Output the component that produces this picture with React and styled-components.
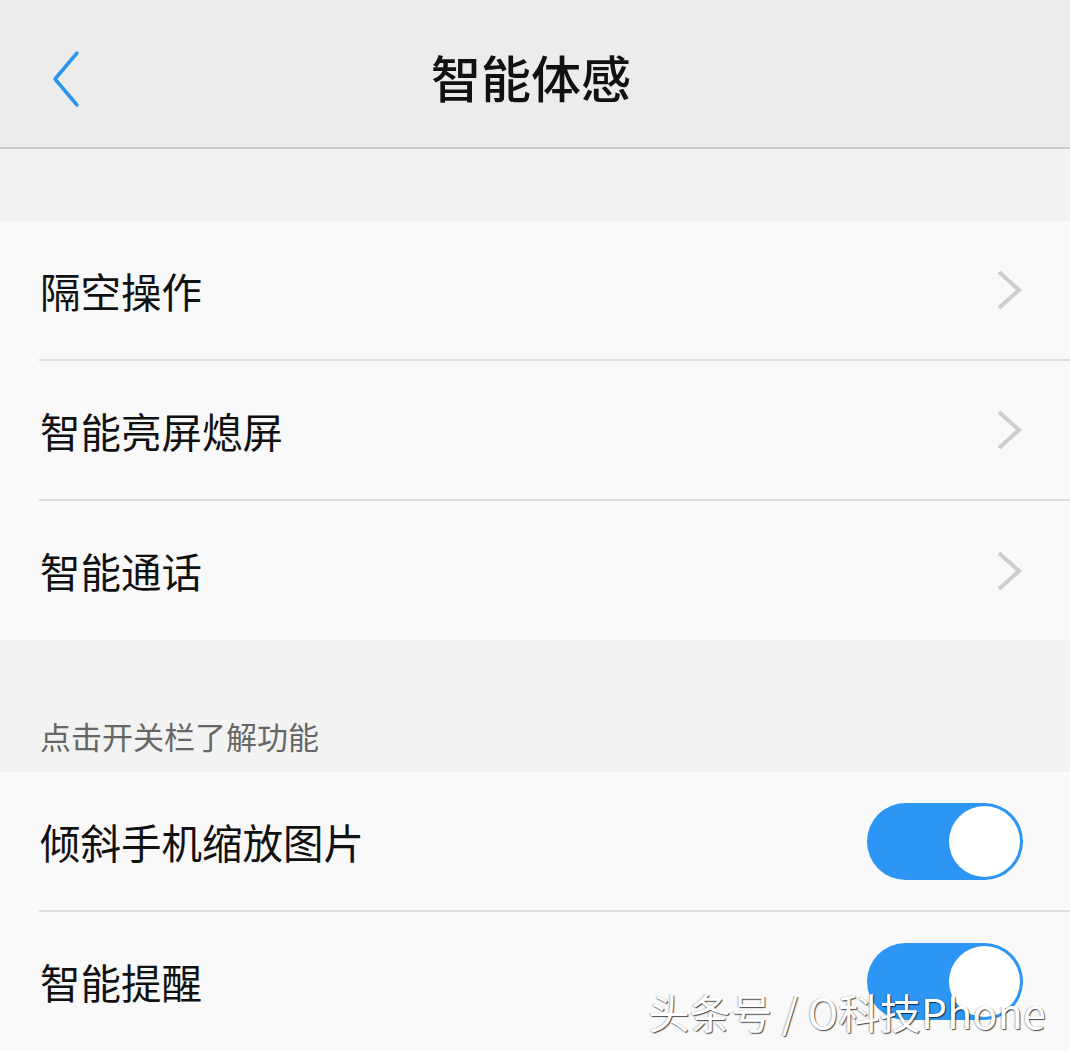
import React, { useState } from "react";
import styled, { createGlobalStyle } from "styled-components";

const GlobalStyle = createGlobalStyle`
  html, body {
    margin: 0;
    padding: 0;
    background: #f3f3f3;
  }
  body {
    font-family: "Noto Sans CJK SC", "Noto Sans", sans-serif;
    color: #111;
  }
`;

const Screen = styled.div`
  position: relative;
  width: 1070px;
  height: 1051px;
  overflow: hidden;
  background: #f3f3f3;
`;

const Header = styled.header`
  height: 147px;
  background: #ececec;
  border-bottom: 2px solid #cbcbcb;
  display: grid;
  grid-template-columns: 120px 1fr 120px;
  align-items: center;
`;

const BackButton = styled.button`
  background: none;
  border: none;
  padding: 10px 0 0 49px;
  height: 100%;
  display: flex;
  align-items: center;
  cursor: pointer;
`;

const Title = styled.h1`
  margin: 0;
  text-align: center;
  font-size: 50px;
  font-weight: 500;
  color: #111;
  padding-top: 4px;
  transform: translateX(-4px);
`;

const Spacer = styled.div`
  height: ${(p) => p.$h}px;
`;

const Card = styled.section`
  background: #f9f9f9;
`;

const Row = styled.div`
  height: ${(p) => (p.$last ? 139 : 138)}px;
  display: flex;
  align-items: center;
  justify-content: space-between;
  padding: 0 46px 0 40px;
  border-bottom: ${(p) => (p.$last ? "none" : "2px solid transparent")};
  position: relative;

  &::after {
    content: "";
    display: ${(p) => (p.$last ? "none" : "block")};
    position: absolute;
    left: 39px;
    right: 0;
    bottom: -2px;
    height: 2px;
    background: #dedede;
  }
`;

const Label = styled.span`
  font-size: 40.5px;
  color: #111;
`;

const SectionLabel = styled.div`
  height: 132px;
  display: flex;
  align-items: flex-end;
  padding: 0 0 14px 40px;
  box-sizing: border-box;
  font-size: 31px;
  color: #666;
`;

const Toggle = styled.button`
  width: 156px;
  height: 77px;
  border-radius: 39px;
  border: none;
  padding: 3px;
  margin-right: 1px;
  background: ${(p) => (p.$on ? "#2d96f5" : "#d9d9d9")};
  display: flex;
  justify-content: ${(p) => (p.$on ? "flex-end" : "flex-start")};
  align-items: center;
  box-sizing: border-box;
  cursor: pointer;
`;

const Knob = styled.span`
  width: 71px;
  height: 71px;
  border-radius: 50%;
  background: #fff;
`;

const Watermark = styled.div`
  position: absolute;
  right: 24px;
  bottom: 10px;
  font-family: "Noto Sans CJK SC", "Liberation Sans", sans-serif;
  font-size: 41px;
  color: #fff;
  letter-spacing: 0.3px;
  text-shadow: 1px 1px 1px rgba(0, 0, 0, 0.7), -1px 0 1px rgba(0, 0, 0, 0.25);
  pointer-events: none;
`;

const BackIcon = () => (
  <svg width="34" height="58" viewBox="0 0 34 58" fill="none">
    <path
      d="M28 3 L6 29 L28 55"
      stroke="#2d95f0"
      strokeWidth="3.5"
      strokeLinecap="round"
      strokeLinejoin="round"
    />
  </svg>
);

const Chevron = () => (
  <svg width="28" height="42" viewBox="0 0 28 42" fill="none">
    <path d="M3 3 L23 21 L3 39" stroke="#cdcdcd" strokeWidth="4" strokeLinejoin="miter" />
  </svg>
);

const links = ["隔空操作", "智能亮屏熄屏", "智能通话"];

export default function App() {
  const [toggles, setToggles] = useState({ tilt: true, remind: true });
  const flip = (k) => setToggles((t) => ({ ...t, [k]: !t[k] }));

  return (
    <Screen>
      <GlobalStyle />
      <Header>
        <BackButton aria-label="返回">
          <BackIcon />
        </BackButton>
        <Title>智能体感</Title>
        <div />
      </Header>
      <Spacer $h={72} />
      <Card>
        {links.map((t, i) => (
          <Row key={t} $last={i === links.length - 1}>
            <Label>{t}</Label>
            <Chevron />
          </Row>
        ))}
      </Card>
      <SectionLabel>点击开关栏了解功能</SectionLabel>
      <Card>
        <Row>
          <Label>倾斜手机缩放图片</Label>
          <Toggle $on={toggles.tilt} onClick={() => flip("tilt")}>
            <Knob />
          </Toggle>
        </Row>
        <Row $last>
          <Label>智能提醒</Label>
          <Toggle $on={toggles.remind} onClick={() => flip("remind")}>
            <Knob />
          </Toggle>
        </Row>
      </Card>
      <Watermark>头条号 / O科技Phone</Watermark>
    </Screen>
  );
}
